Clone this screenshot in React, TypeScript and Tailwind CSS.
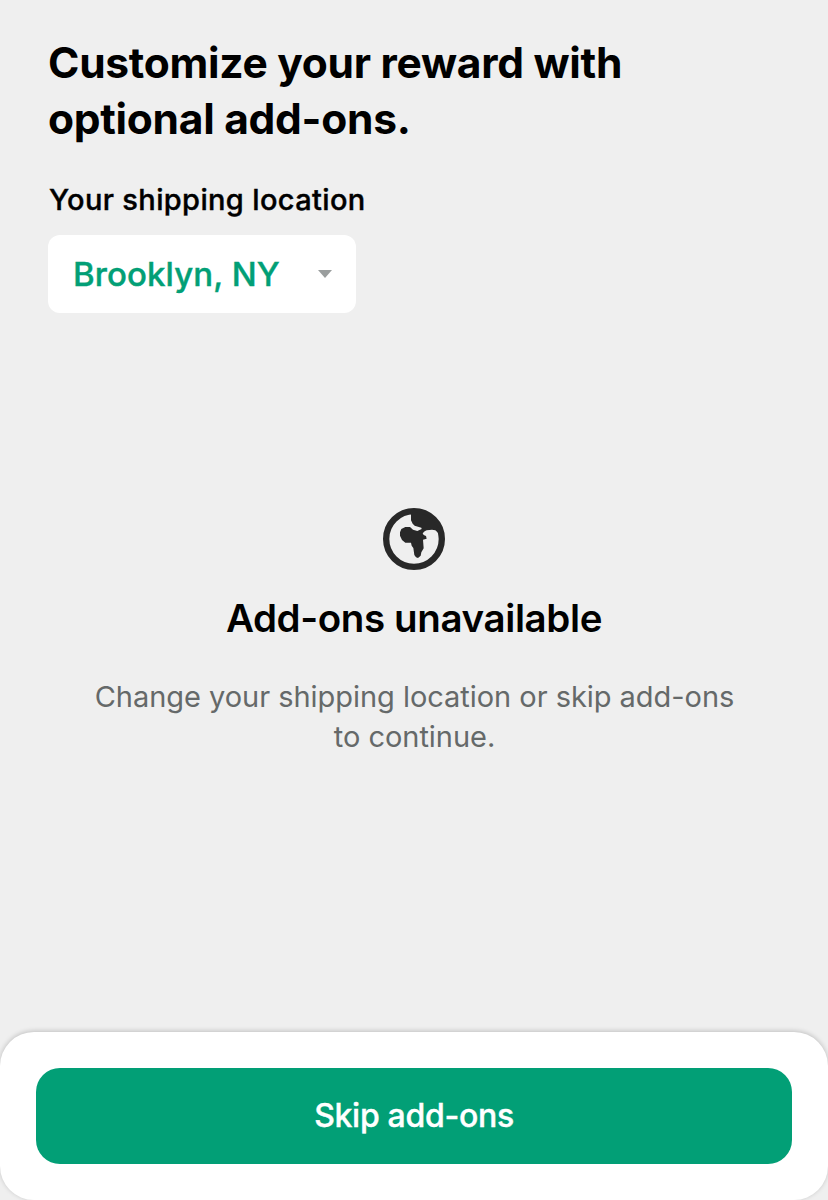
import React from "react";

function GlobeIcon() {
  return (
    <svg width="64" height="64" viewBox="0 0 192 192" className="block" aria-hidden="true">
      <circle cx="96" cy="96" r="83.5" fill="none" stroke="#282828" strokeWidth="19" />
      <path
        fill="#282828"
        d="M87 18 C124 12 168 38 180 92 L171 86 L168 77 L160 70 L150 68 L134 70 L128 73 L122 79 L125 84 L132 87 L134 95 L123 98 L125 124 L118 136 L116 146 L108 153 L102 151 L97 144 L94 123 L89 116 L87 107 L70 107 L60 99 L54 86 L54 76 L58 66 L70 60 L84 60 L93 68 L106 72 L119 66 L118 62 L98 56 L92 50 L87 40 Z"
      />
    </svg>
  );
}

export default function App() {
  return (
    <main className="flex h-[1200px] w-[828px] flex-col bg-[#efefef] font-['Inter',sans-serif] text-black">
      <header className="flex flex-col items-start px-12 pt-[34.5px]">
        <h1 className="text-[42.5px] leading-[56px] font-bold tracking-[-0.28px] whitespace-nowrap">
          Customize your reward with
          <br />
          optional add-ons.
        </h1>
        <p className="mt-[35px] ml-px text-[29px] leading-9 font-medium tracking-[0.36px] [-webkit-text-stroke:0.4px_currentColor]">
          Your shipping location
        </p>
        <button className="mt-[17.5px] flex h-[78px] w-[308px] items-center justify-between rounded-xl bg-white pr-6 pl-[25px] text-[33px] leading-10 font-medium tracking-[0.08px] text-[#029f76] [-webkit-text-stroke:0.4px_currentColor]">
          <span>Brooklyn, NY</span>
          <svg width="14" height="8" viewBox="0 0 14 8" aria-hidden="true">
            <path d="M0 0H14L7 8Z" fill="#9a9e9e" />
          </svg>
        </button>
      </header>

      <section className="mt-[194px] flex flex-1 flex-col items-center text-center">
        <GlobeIcon />
        <h2 className="mt-[23px] text-[38.5px] leading-[48px] font-semibold tracking-[-0.38px]">Add-ons unavailable</h2>
        <p className="mt-[34.5px] ml-px text-[29px] leading-10 tracking-[-0.04px] whitespace-nowrap text-[#656969]">
          Change your shipping location or skip add-ons
          <br />
          to continue.
        </p>
      </section>

      <footer className="h-[168px] rounded-[34px] bg-white p-9 shadow-[0_-1px_5px_rgba(0,0,0,0.2)]">
        <button className="flex h-24 w-full items-center justify-center rounded-3xl bg-[#029f76] text-[32px] leading-10 font-medium tracking-[-0.3px] text-white [-webkit-text-stroke:0.4px_currentColor]">
          Skip add-ons
        </button>
      </footer>
    </main>
  );
}
